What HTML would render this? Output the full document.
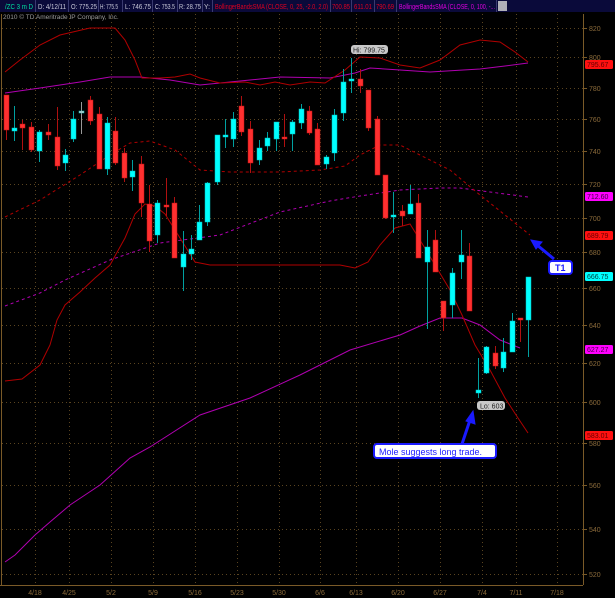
<!DOCTYPE html>
<html><head><meta charset="utf-8"><style>
html,body{margin:0;padding:0;background:#000;width:615px;height:598px;overflow:hidden}
svg{display:block}
text{font-family:"Liberation Sans",sans-serif}
</style></head><body>
<svg id="s" width="615" height="598" viewBox="0 0 615 598" xmlns="http://www.w3.org/2000/svg">
<rect width="615" height="598" fill="#000"/>
<!-- header -->
<rect x="0" y="0" width="615" height="12" fill="#0a0a3a"/>
<g stroke="#3a3a70" stroke-width="1">
<line x1="35.5" y1="0" x2="35.5" y2="12"/><line x1="68.5" y1="0" x2="68.5" y2="12"/><line x1="98.5" y1="0" x2="98.5" y2="12"/><line x1="122.5" y1="0" x2="122.5" y2="12"/><line x1="152.5" y1="0" x2="152.5" y2="12"/><line x1="177.5" y1="0" x2="177.5" y2="12"/><line x1="202.5" y1="0" x2="202.5" y2="12"/><line x1="212.5" y1="0" x2="212.5" y2="12"/><line x1="330.5" y1="0" x2="330.5" y2="12"/><line x1="351.5" y1="0" x2="351.5" y2="12"/><line x1="374.5" y1="0" x2="374.5" y2="12"/><line x1="396.5" y1="0" x2="396.5" y2="12"/><line x1="496.5" y1="0" x2="496.5" y2="12"/>
</g>
<g font-size="7" fill="#c8c8d8">
<text x="5" y="9" fill="#00e0a0" textLength="28" lengthAdjust="spacingAndGlyphs">/ZC 3 m D</text>
<text x="38" y="9" textLength="28" lengthAdjust="spacingAndGlyphs">D: 4/12/11</text>
<text x="71" y="9" textLength="26" lengthAdjust="spacingAndGlyphs">O: 775.25</text>
<text x="100" y="9" textLength="18" lengthAdjust="spacingAndGlyphs">H: 775.5</text>
<text x="125" y="9" textLength="26" lengthAdjust="spacingAndGlyphs">L: 746.75</text>
<text x="155" y="9" textLength="20" lengthAdjust="spacingAndGlyphs">C: 753.5</text>
<text x="179" y="9" textLength="22" lengthAdjust="spacingAndGlyphs">R: 28.75</text>
<text x="204" y="9" textLength="6" lengthAdjust="spacingAndGlyphs">Y:</text>
<text x="215" y="9" fill="#e00020" textLength="113" lengthAdjust="spacingAndGlyphs">BollingerBandsSMA (CLOSE, 0, 25, -2.0, 2.0)</text>
<text x="332" y="9" fill="#e00020" textLength="18" lengthAdjust="spacingAndGlyphs">700.85</text>
<text x="354" y="9" fill="#e00020" textLength="18" lengthAdjust="spacingAndGlyphs">611.01</text>
<text x="376" y="9" fill="#e00020" textLength="18" lengthAdjust="spacingAndGlyphs">790.69</text>
<text x="399" y="9" fill="#e000e0" textLength="96" lengthAdjust="spacingAndGlyphs">BollingerBandsSMA (CLOSE, 0, 100, -...</text>
</g>
<rect x="498" y="1" width="9" height="10" fill="#b0b0b8"/>
<text x="3" y="19" font-size="6.5" fill="#9a9a9a">2010 © TD Ameritrade IP Company, Inc.</text>
<g id="grid" stroke="#5a4420" stroke-width="1" stroke-dasharray="1,3"></g>
<line x1="583.5" y1="14" x2="583.5" y2="585" stroke="#7a5a28"/>
<line x1="1.5" y1="14" x2="1.5" y2="585" stroke="#7a5a28"/>
<line x1="0" y1="585.5" x2="583" y2="585.5" stroke="#7a5a28"/>
<g id="ylab" font-size="7" fill="#8a6a3a"></g>
<g id="xlab" font-size="7" fill="#8a6a3a" text-anchor="middle">
<text x="35" y="595">4/18</text><text x="69" y="595">4/25</text><text x="111" y="595">5/2</text><text x="153" y="595">5/9</text><text x="195" y="595">5/16</text><text x="237" y="595">5/23</text><text x="279" y="595">5/30</text><text x="320" y="595">6/6</text><text x="356" y="595">6/13</text><text x="398" y="595">6/20</text><text x="440" y="595">6/27</text><text x="482" y="595">7/4</text><text x="516" y="595">7/11</text><text x="557" y="595">7/18</text>
</g>
<!-- bands -->
<g fill="none" stroke-width="1">
<polyline stroke="#b000b0" points="5,93 40,88 80,82 110,77 140,77 170,80 200,85 240,81 280,77 330,78 355,73 370,68 400,70 430,72 480,69 505,66 528,63"/>
<polyline stroke="#b000b0" stroke-dasharray="3,3" points="5,306 40,293 65,280 110,260 160,243 220,235 280,212 330,201 360,196 400,190 440,188 460,188 490,192 528,197"/>
<polyline stroke="#b000b0" points="5,562 15,555 35,535 50,522 70,505 100,485 130,458 150,447 200,415 250,398 300,375 350,350 400,335 420,326 440,318 462,318 480,325 500,340 520,348"/>
<polyline stroke="#b00000" points="5,72 20,60 40,45 60,35 90,28 115,28 125,40 135,60 142,78 160,78 175,77 190,74 200,78 220,83 245,82 260,85 275,82 290,85 310,82 325,83 345,70 360,57 380,58 400,65 420,68 440,60 460,45 480,40 500,42 515,52 528,62"/>
<polyline stroke="#b00000" stroke-dasharray="3,3" points="5,217 40,200 80,175 110,155 130,143 150,141 175,150 200,170 230,172 280,172 320,170 345,166 360,155 380,145 400,145 420,155 450,170 480,195 505,215 530,235"/>
<polyline stroke="#b00000" points="5,381 22,379 40,365 50,345 57,320 65,305 80,292 95,278 110,265 125,238 135,214 145,204 155,206 165,214 180,238 195,262 210,265 260,265 300,265 340,265 355,268 368,262 380,245 395,228 410,224 420,240 435,265 450,290 462,315 475,345 490,370 505,398 518,418 528,433"/>
</g>
<g id="candles"></g>
<!-- right tags -->
<g font-size="7" font-family="Liberation Sans">
<rect x="585" y="60" width="28" height="9" rx="1.5" fill="#ff1010"/><text x="587" y="67" fill="#600">795.67</text>
<rect x="585" y="192" width="28" height="9" rx="1.5" fill="#ff00ff"/><text x="587" y="199" fill="#400040">712.60</text>
<rect x="585" y="231" width="28" height="9" rx="1.5" fill="#ff1010"/><text x="587" y="238" fill="#600">689.79</text>
<rect x="585" y="272" width="28" height="9" rx="1.5" fill="#00ffff"/><text x="587" y="279" fill="#004040">666.75</text>
<rect x="585" y="345" width="28" height="9" rx="1.5" fill="#ff00ff"/><text x="587" y="352" fill="#400040">627.27</text>
<rect x="585" y="431" width="28" height="9" rx="1.5" fill="#ff1010"/><text x="587" y="438" fill="#600">583.01</text>
</g>
<!-- annotations -->
<rect x="351" y="45" width="37" height="9" rx="3" fill="#c8c8c8"/><text x="353" y="52.5" font-size="7" fill="#222">Hi: 799.75</text>
<rect x="477" y="401" width="28" height="9" rx="3" fill="#c8c8c8"/><text x="480" y="408.5" font-size="7" fill="#222">Lo: 603</text>
<g fill="#1a1aff" stroke="#1a1aff">
<line x1="554" y1="259" x2="537" y2="245" stroke-width="3"/>
<polygon points="531,240 542,242 536,249"/>
<line x1="462" y1="444" x2="470" y2="420" stroke-width="3"/>
<polygon points="473,411 475,424 466,421"/>
</g>
<rect x="549" y="261" width="23" height="13" rx="3" fill="#fff" stroke="#1a1aff" stroke-width="2"/>
<text x="555" y="271" font-size="9" font-weight="bold" fill="#1a1aff">T1</text>
<rect x="374" y="444" width="122" height="14" rx="3" fill="#fff" stroke="#1a1aff" stroke-width="2"/>
<text x="379" y="455" font-size="9" fill="#1a1aff">Mole suggests long trade.</text>
</svg>
<script>
var NS="http://www.w3.org/2000/svg";
function Y(p){return 574-(Math.log(p)-Math.log(520))*1199;}
var g=document.getElementById('grid'),yl=document.getElementById('ylab');
function el(t,a,par){var e=document.createElementNS(NS,t);for(var k in a)e.setAttribute(k,a[k]);par.appendChild(e);return e;}
for(var p=520;p<=820;p+=20){var y=Math.round(Y(p))+.5;el('line',{x1:2,y1:y,x2:583,y2:y},g);el('line',{x1:583,y1:y,x2:587,y2:y,stroke:'#7a5a28','stroke-dasharray':'none'},g);var t=el('text',{x:589,y:y+2.5},yl);t.textContent=p;}
[35,69,111,153,195,237,279,320,356,398,440,482,516,557].forEach(function(x){el('line',{x1:x+.5,y1:14,x2:x+.5,y2:585},g);});
var C=[[6,95,130,95,140,'r'],[14,128,131,106,141,'c'],[22,124,128,120,150,'r'],[31,127,150,122,152,'r'],[39,132,151,130,162,'c'],[48,132,135,124,140,'r'],[57,137,166,107,170,'r'],[65,155,163,149,171,'c'],[73,119,139,111,142,'c'],[81,111,112,102,134,'g'],[90,100,121,96,125,'r'],[99,114,169,107,169,'r'],[107,123,169,117,175,'c'],[115,131,163,117,165,'r'],[124,153,178,148,182,'r'],[132,171,177,160,191,'c'],[141,164,203,156,217,'r'],[149,204,241,185,252,'r'],[157,203,235,200,243,'c'],[166,205,207,178,216,'r'],[174,203,258,197,258,'r'],[183,254,267,231,291,'c'],[191,249,254,235,260,'c'],[199,222,240,205,240,'c'],[207,183,222,182,226,'c'],[217,135,182,135,185,'c'],[225,135,137,119,148,'c'],[233,119,139,112,147,'c'],[241,106,132,96,136,'r'],[250,129,163,121,173,'r'],[259,148,160,140,165,'c'],[267,138,146,132,151,'c'],[276,122,139,122,151,'c'],[284,137,139,114,147,'r'],[292,122,134,120,151,'c'],[301,109,123,104,129,'c'],[309,111,133,106,135,'r'],[317,129,165,123,165,'r'],[326,157,164,155,169,'c'],[334,115,153,109,161,'c'],[343,82,113,69,121,'c'],[351,79,81,58,93,'c'],[360,79,86,69,93,'r'],[368,90,128,90,131,'r'],[377,119,175,116,175,'r'],[385,175,218,175,219,'r'],[393,215,217,192,233,'c'],[402,211,216,205,226,'r'],[410,204,214,185,214,'c'],[418,203,258,194,258,'r'],[427,247,262,230,329,'c'],[435,240,272,230,272,'r'],[443,301,318,301,331,'r'],[452,273,305,268,318,'c'],[461,255,262,230,279,'c'],[469,256,311,243,311,'r'],[478,390,393,358,398,'c'],[486,347,373,346,374,'c'],[495,353,366,346,369,'r'],[503,352,368,338,372,'c'],[512,321,352,313,352,'c'],[520,318,320,318,342,'r'],[528,277,320,318,357,'c']];
var cg=document.getElementById('candles');
C.forEach(function(c){var col=c[5]=='r'?'#ff3030':c[5]=='c'?'#00ffff':'#cccccc';var wc=c[5]=='r'?'#b01010':c[5]=='c'?'#00a0a0':'#999';
el('line',{x1:c[0]+.5,y1:c[3],x2:c[0]+.5,y2:c[4],stroke:wc,'stroke-width':1},cg);
el('rect',{x:c[0]-2,y:c[1],width:5,height:Math.max(2,c[2]-c[1]),fill:col,stroke:c[5]=='r'?'#c01010':'#00c0c0','stroke-width':.5},cg);});
</script>
</body></html>
